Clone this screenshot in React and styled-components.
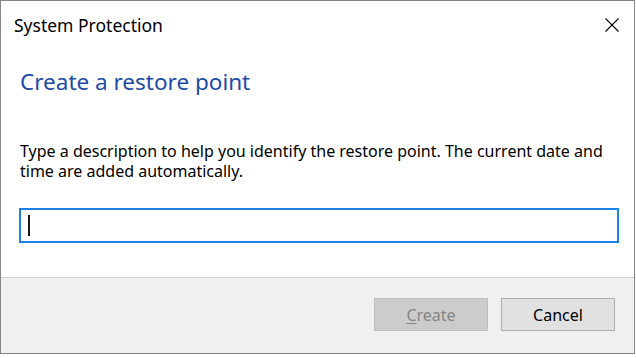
import React from 'react';
import styled, { createGlobalStyle } from 'styled-components';

const GlobalStyle = createGlobalStyle`
  *, *::before, *::after {
    box-sizing: border-box;
  }
  html, body {
    margin: 0;
    padding: 0;
    background: #ffffff;
    overflow: hidden;
  }
  body {
    font-family: "Segoe UI", "Noto Sans", "Open Sans", sans-serif;
    color: #000;
  }
`;

const Page = styled.div`
  width: 636px;
  height: 358px;
  overflow: hidden;
`;

const Window = styled.div`
  width: 635px;
  height: 354px;
  border: 1px solid #858585;
  background: #ffffff;
  display: flex;
  flex-direction: column;
`;

const TitleBar = styled.div`
  height: 48px;
  display: flex;
  align-items: center;
  justify-content: space-between;
  padding: 0 15px 0 13px;
  flex-shrink: 0;
`;

const Title = styled.span`
  font-size: 17.5px;
  line-height: 48px;
  color: #000;
`;

const CloseButton = styled.button`
  border: none;
  background: transparent;
  padding: 0;
  width: 14px;
  height: 14px;
  display: flex;
  align-items: center;
  justify-content: center;
  cursor: pointer;
`;

const Content = styled.div`
  flex: 1;
  display: flex;
  flex-direction: column;
  padding: 18px 14px 0 19px;
`;

const Heading = styled.h1`
  margin: 0;
  font-size: 22.5px;
  line-height: 30px;
  font-weight: 400;
  color: #1a4ca6;
`;

const Description = styled.p`
  margin: 44px 0 0;
  font-size: 16px;
  line-height: 20px;
`;

const InputField = styled.div`
  margin: 27px 0 0 -1px;
  width: 600px;
  height: 35px;
  border: 2px solid #1b81e2;
  display: flex;
  align-items: center;
  padding-left: 7px;
`;

const Caret = styled.span`
  width: 2px;
  height: 21px;
  background: #1a1a1a;
`;

const Footer = styled.div`
  height: 76px;
  flex-shrink: 0;
  border-top: 1px solid #cfcfcf;
  background: #f0f0f0;
  display: flex;
  justify-content: flex-end;
  align-items: flex-start;
  gap: 13px;
  padding: 20px 19px 0 0;
`;

const Button = styled.button`
  width: 114px;
  height: 33px;
  font-family: inherit;
  font-size: 16px;
  border: 1px solid ${(p) => (p.disabled ? '#bfbfbf' : '#adadad')};
  background: ${(p) => (p.disabled ? '#cccccc' : '#e1e1e1')};
  color: ${(p) => (p.disabled ? '#858585' : '#000000')};
  padding: 0;
  cursor: ${(p) => (p.disabled ? 'default' : 'pointer')};

  u {
    text-decoration-thickness: 1px;
    text-underline-offset: 2px;
  }
`;

const Behind = styled.div`
  padding-left: 5px;
  font-size: 15px;
  line-height: 20px;
  color: #222;
`;

function CloseIcon() {
  return (
    <svg width="14" height="14" viewBox="0 0 14 14">
      <path d="M0.5 0.5 L13.5 13.5 M13.5 0.5 L0.5 13.5" stroke="#000" strokeWidth="1.1" />
    </svg>
  );
}

export default function App() {
  return (
    <Page>
      <GlobalStyle />
      <Window>
        <TitleBar>
          <Title>System Protection</Title>
          <CloseButton aria-label="Close">
            <CloseIcon />
          </CloseButton>
        </TitleBar>
        <Content>
          <Heading>Create a restore point</Heading>
          <Description>
            Type a description to help you identify the restore point. The current date and
            time are added automatically.
          </Description>
          <InputField>
            <Caret />
          </InputField>
        </Content>
        <Footer>
          <Button disabled>
            <u>C</u>reate
          </Button>
          <Button>Cancel</Button>
        </Footer>
      </Window>
      <Behind>option</Behind>
    </Page>
  );
}
